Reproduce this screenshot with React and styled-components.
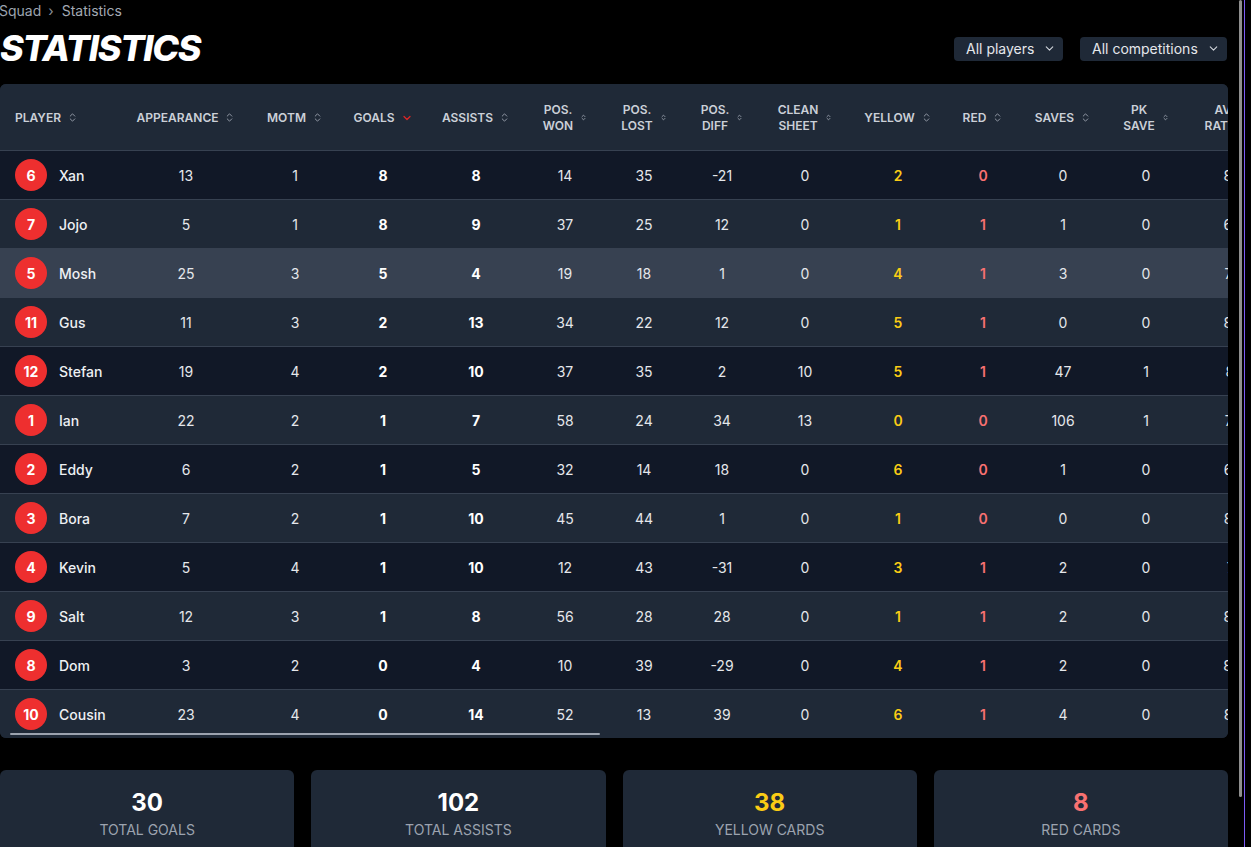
import React from "react";
import styled, { createGlobalStyle } from "styled-components";
import { ChevronDown, ChevronsUpDown } from "lucide-react";

const GlobalStyle = createGlobalStyle`
  html, body {
    margin: 0;
    padding: 0;
    background: #000000;
    font-family: Inter, "Noto Sans", sans-serif;
    overflow: hidden;
  }
  * {
    box-sizing: border-box;
  }
`;

const COLUMNS = [
  { key: "player", label: "PLAYER", width: 122, align: "left" },
  { key: "apps", label: "APPEARANCE", width: 128 },
  { key: "motm", label: "MOTM", width: 90 },
  { key: "goals", label: "GOALS", width: 86, active: true, strong: true },
  { key: "assists", label: "ASSISTS", width: 100, strong: true },
  { key: "won", label: "POS.\nWON", width: 78 },
  { key: "lost", label: "POS.\nLOST", width: 80 },
  { key: "diff", label: "POS.\nDIFF", width: 76 },
  { key: "clean", label: "CLEAN\nSHEET", width: 90 },
  { key: "yellow", label: "YELLOW", width: 96, tone: "yellow" },
  { key: "red", label: "RED", width: 74, tone: "red" },
  { key: "saves", label: "SAVES", width: 86 },
  { key: "pk", label: "PK\nSAVE", width: 80 },
  { key: "rating", label: "AVG\nRATING", width: 96 },
];

const GRID = COLUMNS.map((c) => `${c.width}px`).join(" ");

const PLAYERS = [
  [6, "Xan", 13, 1, 8, 8, 14, 35, -21, 0, 2, 0, 0, 0, "8.2"],
  [7, "Jojo", 5, 1, 8, 9, 37, 25, 12, 0, 1, 1, 1, 0, "6.9"],
  [5, "Mosh", 25, 3, 5, 4, 19, 18, 1, 0, 4, 1, 3, 0, "7.4"],
  [11, "Gus", 11, 3, 2, 13, 34, 22, 12, 0, 5, 1, 0, 0, "8.0"],
  [12, "Stefan", 19, 4, 2, 10, 37, 35, 2, 10, 5, 1, 47, 1, "8.1"],
  [1, "Ian", 22, 2, 1, 7, 58, 24, 34, 13, 0, 0, 106, 1, "7.6"],
  [2, "Eddy", 6, 2, 1, 5, 32, 14, 18, 0, 6, 0, 1, 0, "6.8"],
  [3, "Bora", 7, 2, 1, 10, 45, 44, 1, 0, 1, 0, 0, 0, "8.3"],
  [4, "Kevin", 5, 4, 1, 10, 12, 43, -31, 0, 3, 1, 2, 0, "7.1"],
  [9, "Salt", 12, 3, 1, 8, 56, 28, 28, 0, 1, 1, 2, 0, "8.0"],
  [8, "Dom", 3, 2, 0, 4, 10, 39, -29, 0, 4, 1, 2, 0, "8.4"],
  [10, "Cousin", 23, 4, 0, 14, 52, 13, 39, 0, 6, 1, 4, 0, "8.5"],
];

const HOVERED = "Mosh";

const Page = styled.div`
  display: flex;
  align-items: flex-start;
  height: 100vh;
  overflow: hidden;
`;

const Main = styled.main`
  width: 1228px;
  flex-shrink: 0;
  display: flex;
  flex-direction: column;

  & > * {
    flex-shrink: 0;
  }
`;

const Breadcrumb = styled.nav`
  display: flex;
  align-items: center;
  font-size: 14px;
  line-height: 20px;
  margin: 1px 0 0 -1px;
`;

const Crumb = styled.span`
  color: ${(p) => (p.$current ? "#a3a9b3" : "#9ca3af")};
`;

const Sep = styled.span`
  margin: 0 8px 0 7px;
  color: #8b919b;
`;

const TitleRow = styled.div`
  display: flex;
  align-items: center;
  justify-content: space-between;
  margin-top: 7px;
  height: 40px;
`;

const Title = styled.h1`
  margin: 0;
  font-size: 36px;
  line-height: 40px;
  font-weight: 800;
  font-style: italic;
  letter-spacing: -0.035em;
  color: #ffffff;
`;

const Filters = styled.div`
  display: flex;
  gap: 17px;
  margin: 1px 1px 0 0;
`;

const SelectBox = styled.div`
  display: flex;
  align-items: center;
  justify-content: space-between;
  flex-shrink: 0;
  white-space: nowrap;
  width: ${(p) => p.$w}px;
  height: 24px;
  padding: 0 7px 0 12px;
  background: #1f2937;
  border-radius: 4px;
  color: #e5e7eb;
  font-size: 14px;
`;

const TableCard = styled.section`
  position: relative;
  margin-top: 16px;
  background: #1f2937;
  border-radius: 6px;
  overflow: hidden;
`;

const Row = styled.div`
  display: grid;
  grid-template-columns: ${GRID};
  width: max-content;
`;

const HeadRow = styled(Row)`
  height: 66px;
  padding-top: 1px;
  background: #1f2937;
`;

const BodyRow = styled(Row)`
  height: 49px;
  border-top: 1px solid #374151;
  background: ${(p) => (p.$hover ? "#374151" : p.$odd ? "#1f2937" : "#111827")};
`;

const HeadCell = styled.div`
  display: flex;
  align-items: center;
  justify-content: ${(p) => (p.$left ? "flex-start" : "center")};
  gap: ${(p) => (p.$small ? 7 : 6)}px;
  padding: ${(p) => (p.$left ? "0 0 0 15px" : "0 12px")};
  color: #cbd0d8;
  font-size: 12px;
  font-weight: 600;
  line-height: 16px;
`;

const HeadLabel = styled.span`
  white-space: pre-line;
  text-align: center;
`;

const Cell = styled.div`
  display: flex;
  align-items: center;
  justify-content: center;
  font-size: 14px;
  font-weight: ${(p) => (p.$strong ? 700 : p.$tone ? 600 : 400)};
  color: ${(p) =>
    p.$tone === "yellow"
      ? "#facc15"
      : p.$tone === "red"
      ? "#f87171"
      : p.$strong
      ? "#ffffff"
      : "#e5e7eb"};
`;

const PlayerCell = styled.div`
  display: flex;
  align-items: center;
  gap: 12px;
  padding-left: 15px;
`;

const Badge = styled.span`
  width: 32px;
  height: 32px;
  border-radius: 50%;
  background: #ee2f2f;
  color: #ffffff;
  display: flex;
  align-items: center;
  justify-content: center;
  font-size: 14px;
  font-weight: 700;
  flex-shrink: 0;
`;

const Name = styled.span`
  font-size: 14px;
  font-weight: 500;
  color: #eef0f3;
`;

const ScrollThumb = styled.div`
  position: absolute;
  left: 10px;
  bottom: 3px;
  width: 590px;
  height: 2px;
  border-radius: 1px;
  background: #9ca3af;
`;

const Summary = styled.div`
  display: grid;
  grid-template-columns: repeat(4, 1fr);
  gap: 17px;
  margin-top: 32px;
`;

const StatCard = styled.div`
  background: #1f2937;
  border-radius: 6px;
  padding: 17px 16px 18px;
  display: flex;
  flex-direction: column;
  align-items: center;
`;

const StatValue = styled.div`
  font-size: 24px;
  line-height: 32px;
  font-weight: 700;
  color: ${(p) => p.$color || "#ffffff"};
`;

const StatLabel = styled.div`
  margin-top: 1px;
  font-size: 14px;
  line-height: 20px;
  color: #9ca3af;
  text-transform: uppercase;
`;

const Rail = styled.div`
  display: flex;
  gap: 2px;
  padding-left: 11px;
  height: 100vh;
`;

const RailThumb = styled.div`
  width: 3px;
  height: 797px;
  border-radius: 2px;
  background: #8f8f8f;
`;

const RailLine = styled.div`
  width: 1px;
  height: 100%;
  background: #7c5cf6;
`;

const SortIcon = ({ col }) => {
  if (col.active) return <ChevronDown size={12} color="#dc2626" strokeWidth={2.5} />;
  const small = col.label.includes("\n");
  return (
    <ChevronsUpDown
      size={small ? 7 : 11}
      color="#9ca3af"
      strokeWidth={small ? 3 : 2}
      style={{ flexShrink: 0 }}
    />
  );
};

const stats = [
  { value: 30, label: "Total goals" },
  { value: 102, label: "Total assists" },
  { value: 38, label: "Yellow cards", color: "#facc15" },
  { value: 8, label: "Red cards", color: "#f87171" },
];

export default function App() {
  return (
    <>
      <GlobalStyle />
      <Page>
        <Main>
          <Breadcrumb>
            <Crumb>Squad</Crumb>
            <Sep>›</Sep>
            <Crumb $current>Statistics</Crumb>
          </Breadcrumb>
          <TitleRow>
            <Title>STATISTICS</Title>
            <Filters>
              <SelectBox $w={109}>
                <span>All players</span>
                <ChevronDown size={13} color="#d1d5db" />
              </SelectBox>
              <SelectBox $w={147}>
                <span>All competitions</span>
                <ChevronDown size={13} color="#d1d5db" />
              </SelectBox>
            </Filters>
          </TitleRow>

          <TableCard>
            <HeadRow>
              {COLUMNS.map((col) => (
                <HeadCell
                  key={col.key}
                  $left={col.align === "left"}
                  $small={col.label.includes("\n")}
                >
                  <HeadLabel>{col.label}</HeadLabel>
                  <SortIcon col={col} />
                </HeadCell>
              ))}
            </HeadRow>
            {PLAYERS.map((p, i) => {
              const [num, name, ...values] = p;
              return (
                <BodyRow key={name} $odd={i % 2 === 1} $hover={name === HOVERED}>
                  <PlayerCell>
                    <Badge>{num}</Badge>
                    <Name>{name}</Name>
                  </PlayerCell>
                  {values.map((v, j) => {
                    const col = COLUMNS[j + 1];
                    return (
                      <Cell key={col.key} $strong={col.strong} $tone={col.tone}>
                        {v}
                      </Cell>
                    );
                  })}
                </BodyRow>
              );
            })}
            <ScrollThumb />
          </TableCard>

          <Summary>
            {stats.map((s) => (
              <StatCard key={s.label}>
                <StatValue $color={s.color}>{s.value}</StatValue>
                <StatLabel>{s.label}</StatLabel>
              </StatCard>
            ))}
          </Summary>
        </Main>
        <Rail>
          <RailThumb />
          <RailLine />
        </Rail>
      </Page>
    </>
  );
}
